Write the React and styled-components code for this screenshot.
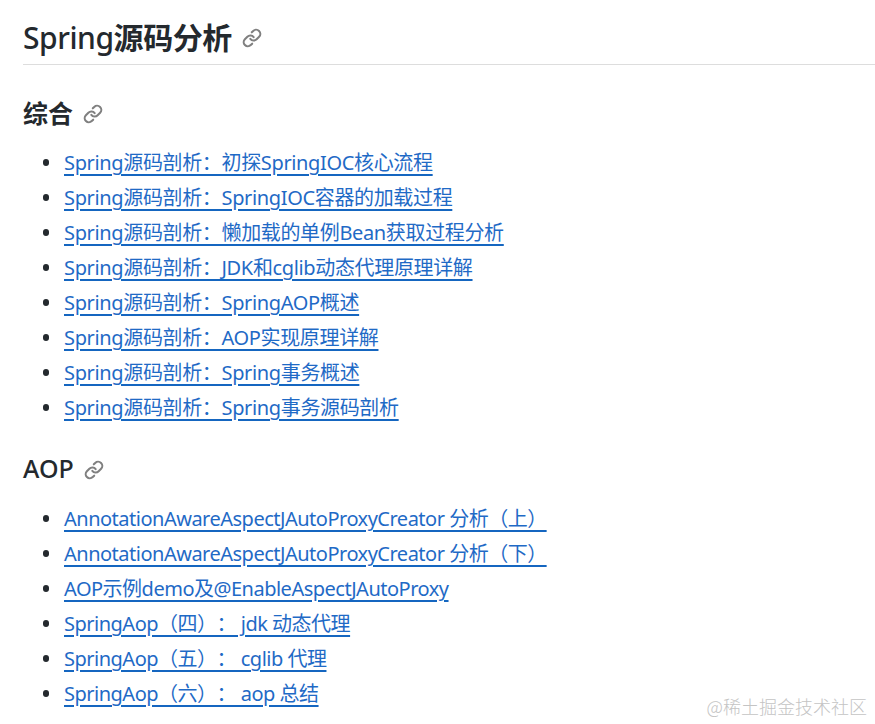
import React from "react";
import styled, { createGlobalStyle } from "styled-components";

const sections = [
  {
    title: "综合",
    strong: true,
    links: [
      "Spring源码剖析：初探SpringIOC核心流程",
      "Spring源码剖析：SpringIOC容器的加载过程",
      "Spring源码剖析：懒加载的单例Bean获取过程分析",
      "Spring源码剖析：JDK和cglib动态代理原理详解",
      "Spring源码剖析：SpringAOP概述",
      "Spring源码剖析：AOP实现原理详解",
      "Spring源码剖析：Spring事务概述",
      "Spring源码剖析：Spring事务源码剖析",
    ],
  },
  {
    title: "AOP",
    tight: true,
    links: [
      "AnnotationAwareAspectJAutoProxyCreator 分析（上）",
      "AnnotationAwareAspectJAutoProxyCreator 分析（下）",
      "AOP示例demo及@EnableAspectJAutoProxy",
      "SpringAop（四）： jdk 动态代理",
      "SpringAop（五）： cglib 代理",
      "SpringAop（六）： aop 总结",
    ],
  },
];

const GlobalStyle = createGlobalStyle`
  html, body {
    margin: 0;
    padding: 0;
    background: #fff;
  }
  body {
    font-family: "Noto Sans", "Noto Sans CJK SC", sans-serif;
    overflow: hidden;
  }
`;

const Page = styled.div`
  height: 724px;
  padding: 11px 0 0 23px;
  box-sizing: border-box;
  position: relative;
  overflow: hidden;
`;

const Title = styled.h1`
  display: flex;
  align-items: center;
  gap: 10px;
  margin: 0 0 25px;
  height: 54px;
  padding-bottom: 4px;
  box-sizing: border-box;
  border-bottom: 1px solid #dddddd;
  font-size: 30px;
  font-weight: 500;
  color: #24292e;
  letter-spacing: -0.45px;
  svg {
    margin-top: 5px;
  }
`;

const Heading = styled.h2`
  display: flex;
  align-items: center;
  gap: 10px;
  margin: 0 0 11px;
  height: 44px;
  font-size: 25px;
  font-weight: 500;
  color: #24292e;
  svg {
    margin-top: 4px;
  }
`;

const Cjk = styled.span`
  font-weight: 700;
`;

const LinkList = styled.ul`
  margin: 0 0 21px;
  padding: 0 0 0 19.5px;
  list-style: none;
  font-size: 20px;
  text-spacing-trim: space-all;
  letter-spacing: ${(p) => (p.$tight ? "-0.5px" : "-0.35px")};
`;

const Item = styled.li`
  display: flex;
  align-items: center;
  gap: 15px;
  height: 35px;
  line-height: 35px;
  &::before {
    content: "";
    width: 6.5px;
    height: 6.5px;
    border-radius: 50%;
    background: #24292e;
  }
`;

const Anchor = styled.a`
  color: #1f6ac6;
  text-decoration: underline 2px #1566c0;
  text-underline-offset: 4px;
`;

const Watermark = styled.div`
  position: absolute;
  right: 8px;
  bottom: 5px;
  font-family: "Noto Sans CJK SC", sans-serif;
  font-size: 18px;
  font-weight: 300;
  color: #c4c4c4;
`;

const LinkIcon = () => (
  <svg width="20" height="20" viewBox="0 0 24 24" fill="none" stroke="#808080" strokeWidth="2.5" strokeLinecap="round" strokeLinejoin="round">
    <path d="M10 13a5 5 0 0 0 7.54.54l3-3a5 5 0 0 0-7.07-7.07l-1.72 1.71" />
    <path d="M14 11a5 5 0 0 0-7.54-.54l-3 3a5 5 0 0 0 7.07 7.07l1.71-1.71" />
  </svg>
);

export default function App() {
  return (
    <Page>
      <GlobalStyle />
      <Title>
        <span>Spring<Cjk>源码分析</Cjk></span>
        <LinkIcon />
      </Title>
      {sections.map((s) => (
        <section key={s.title}>
          <Heading>
            {s.strong ? <Cjk>{s.title}</Cjk> : s.title}
            <LinkIcon />
          </Heading>
          <LinkList $tight={s.tight}>
            {s.links.map((l) => (
              <Item key={l}>
                <Anchor href="#">{l}</Anchor>
              </Item>
            ))}
          </LinkList>
        </section>
      ))}
      <Watermark>@稀土掘金技术社区</Watermark>
    </Page>
  );
}
